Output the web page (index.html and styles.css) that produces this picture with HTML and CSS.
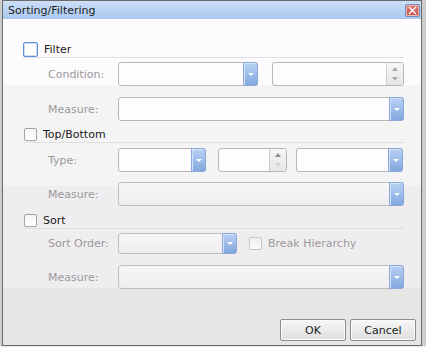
FILE: index.html
```html
<!DOCTYPE html>
<html lang="en">
<head>
  <meta charset="UTF-8" />
  <title>Sorting/Filtering</title>
  <link rel="stylesheet" href="styles.css">
</head>
<body>
  <div class="dialog">
    <div class="titlebar">
      <span class="title">Sorting/Filtering</span>
      <span class="close">
        <svg width="9" height="9" viewBox="0 0 9 9"><path d="M1 1 L8 8 M8 1 L1 8" stroke="#fff" stroke-width="1.4" fill="none"/></svg>
      </span>
    </div>

    <div class="body">
      <div class="group-head">
        <span class="check focus"></span><span class="head-label">Filter</span>
      </div>
      <div class="row gap-first">
        <span class="label">Condition:</span>
        <div class="combo w-cond"><span class="field"></span><span class="drop"></span></div>
        <div class="spin w-value"><span class="field"></span><span class="spin-btns"><i class="up"></i><i class="down"></i></span></div>
      </div>
      <div class="row gap-second">
        <span class="label">Measure:</span>
        <div class="combo w-full"><span class="field"></span><span class="drop"></span></div>
      </div>

      <div class="group-head gap-head">
        <span class="check"></span><span class="head-label">Top/Bottom</span>
      </div>
      <div class="row gap-type">
        <span class="label">Type:</span>
        <div class="combo w-type"><span class="field"></span><span class="drop"></span></div>
        <div class="spin w-count"><span class="field"></span><span class="spin-btns"><i class="up dark"></i><i class="down light"></i></span></div>
        <div class="combo w-kind"><span class="field"></span><span class="drop"></span></div>
      </div>
      <div class="row gap-measure2">
        <span class="label">Measure:</span>
        <div class="combo w-full disabled"><span class="field"></span><span class="drop"></span></div>
      </div>

      <div class="group-head gap-head3">
        <span class="check"></span><span class="head-label">Sort</span>
      </div>
      <div class="row short gap-first">
        <span class="label">Sort Order:</span>
        <div class="combo w-order disabled"><span class="field"></span><span class="drop"></span></div>
        <span class="check small"></span><span class="muted">Break Hierarchy</span>
      </div>
      <div class="row gap-second">
        <span class="label">Measure:</span>
        <div class="combo w-full disabled"><span class="field"></span><span class="drop"></span></div>
      </div>

      <div class="footer">
        <button class="btn">OK</button>
        <button class="btn">Cancel</button>
      </div>
    </div>
  </div>
</body>
</html>
```

FILE: styles.css
```css
* {
  box-sizing: border-box;
  margin: 0;
  padding: 0;
}
body {
  background: #cdcdcd;
  font-family: 'DejaVu Sans', Verdana, sans-serif;
  font-size: 11px;
  color: #222;
  height: 347px;
  overflow: hidden;
  border-bottom: 1px solid #ebe7eb;
}
.dialog {
  margin-left: 2px;
  width: 420px;
  height: 346px;
  border: 1px solid #6c6c6c;
  display: flex;
  flex-direction: column;
}
.titlebar {
  height: 19px;
  border-bottom: 1px solid #fff;
  background: linear-gradient(#cddff6, #a9c8f0);
  display: flex;
  align-items: center;
  justify-content: space-between;
  padding: 0 1px 0 5px;
}
.title {
  color: #1e1e1e;
}
.close {
  width: 15px;
  height: 13px;
  border: 1px solid #6f8db9;
  background: linear-gradient(#e07a72, #c9504a);
  box-shadow: inset 0 0 0 1px #f1b5b0;
  border-radius: 2px;
  display: flex;
  align-items: center;
  justify-content: center;
}
.close svg {
  display: block;
}
.body {
  flex: 1;
  padding-top: 22px;
  background: linear-gradient(#fdfbfd 0, #fdfbfd 65px, #f5f4f5 65px, #f5f4f5 166px,
    #efedef 166px, #efedef 268px, #e6e6e6 268px);
}
.group-head {
  height: 16px;
  margin: 0 17px 0 20px;
  border-bottom: 1px solid #e1dee1;
  display: flex;
  align-items: center;
  padding-bottom: 1px;
}
.head-label {
  margin-left: 6px;
}
.check {
  width: 13px;
  height: 13px;
  margin-left: 1px;
  border: 1px solid #a3a3a3;
  border-radius: 2px;
  background: linear-gradient(#f4f4f4, #fff);
}
.check.focus {
  width: 15px;
  height: 15px;
  margin-left: 0;
  border: 1px solid #5f92dc;
  box-shadow: inset 0 0 0 1px #c9dbf5;
  background: #fff;
}
.gap-head { margin-top: 6px; }
.gap-head3 { margin-top: 7px; }
.row {
  height: 24px;
  display: flex;
  align-items: center;
  padding-left: 45px;
}
.row.short { height: 21px; }
.gap-first { margin-top: 4px; }
.gap-second { margin-top: 11px; }
.gap-type { margin-top: 5px; }
.gap-measure2 { margin-top: 10px; }
.label {
  width: 70px;
  color: #9a9a9a;
}
.combo, .spin {
  height: 100%;
  display: flex;
  border: 1px solid #b7b7b7;
  border-radius: 3px;
  background: #fefcfe;
}
.combo.disabled {
  background: linear-gradient(#f7f6f7, #efedef);
  border-color: #bdbdbd;
}
.field {
  flex: 1;
}
.drop {
  width: 15px;
  margin: -1px -1px -1px 0;
  border: 1px solid #8aa8d8;
  border-radius: 0 3px 3px 0;
  background: linear-gradient(#b8d1f3, #82a8e0);
  box-shadow: inset 1px 1px 0 #d3e2f7;
  display: flex;
  align-items: center;
  justify-content: center;
}
.drop::after {
  content: "";
  border-left: 3px solid transparent;
  border-right: 3px solid transparent;
  border-top: 3px solid #fff;
}
.spin-btns {
  width: 17px;
  border-left: 1px solid #cfcfcf;
  background: linear-gradient(#f6f6f6, #e6e6e6);
  border-radius: 0 2px 2px 0;
  display: flex;
  flex-direction: column;
  align-items: center;
  justify-content: center;
  gap: 6px;
}
.spin-btns i {
  display: block;
  border-left: 3px solid transparent;
  border-right: 3px solid transparent;
}
.spin-btns .up { border-bottom: 4px solid #a9a9a9; }
.spin-btns .down { border-top: 4px solid #a9a9a9; }
.spin-btns .dark { border-bottom-color: #8e8e8e; }
.spin-btns .light { border-top-color: #d2d2d2; }
.w-cond { width: 140px; }
.w-value { width: 132px; margin-left: 14px; }
.w-full { width: 286px; }
.w-type { width: 88px; }
.w-count { width: 69px; margin-left: 12px; }
.w-kind { width: 107px; margin-left: 9px; }
.w-order { width: 119px; }
.check.small {
  margin-left: 12px;
  border-color: #c6c6c6;
  background: linear-gradient(#f0eef0, #fbfbfb);
}
.muted {
  margin-left: 6px;
  color: #9a9a9a;
}
.footer {
  margin-top: 30px;
  display: flex;
  justify-content: flex-end;
  gap: 4px;
  padding-right: 5px;
}
.btn {
  width: 66px;
  height: 22px;
  font-family: 'DejaVu Sans', Verdana, sans-serif;
  font-size: 11px;
  color: #222;
  border: 1px solid #8c8c8c;
  border-radius: 2px;
  background: linear-gradient(#f7f7f7, #dedede);
  box-shadow: inset 0 0 0 1px #fbfbfb;
}
```
